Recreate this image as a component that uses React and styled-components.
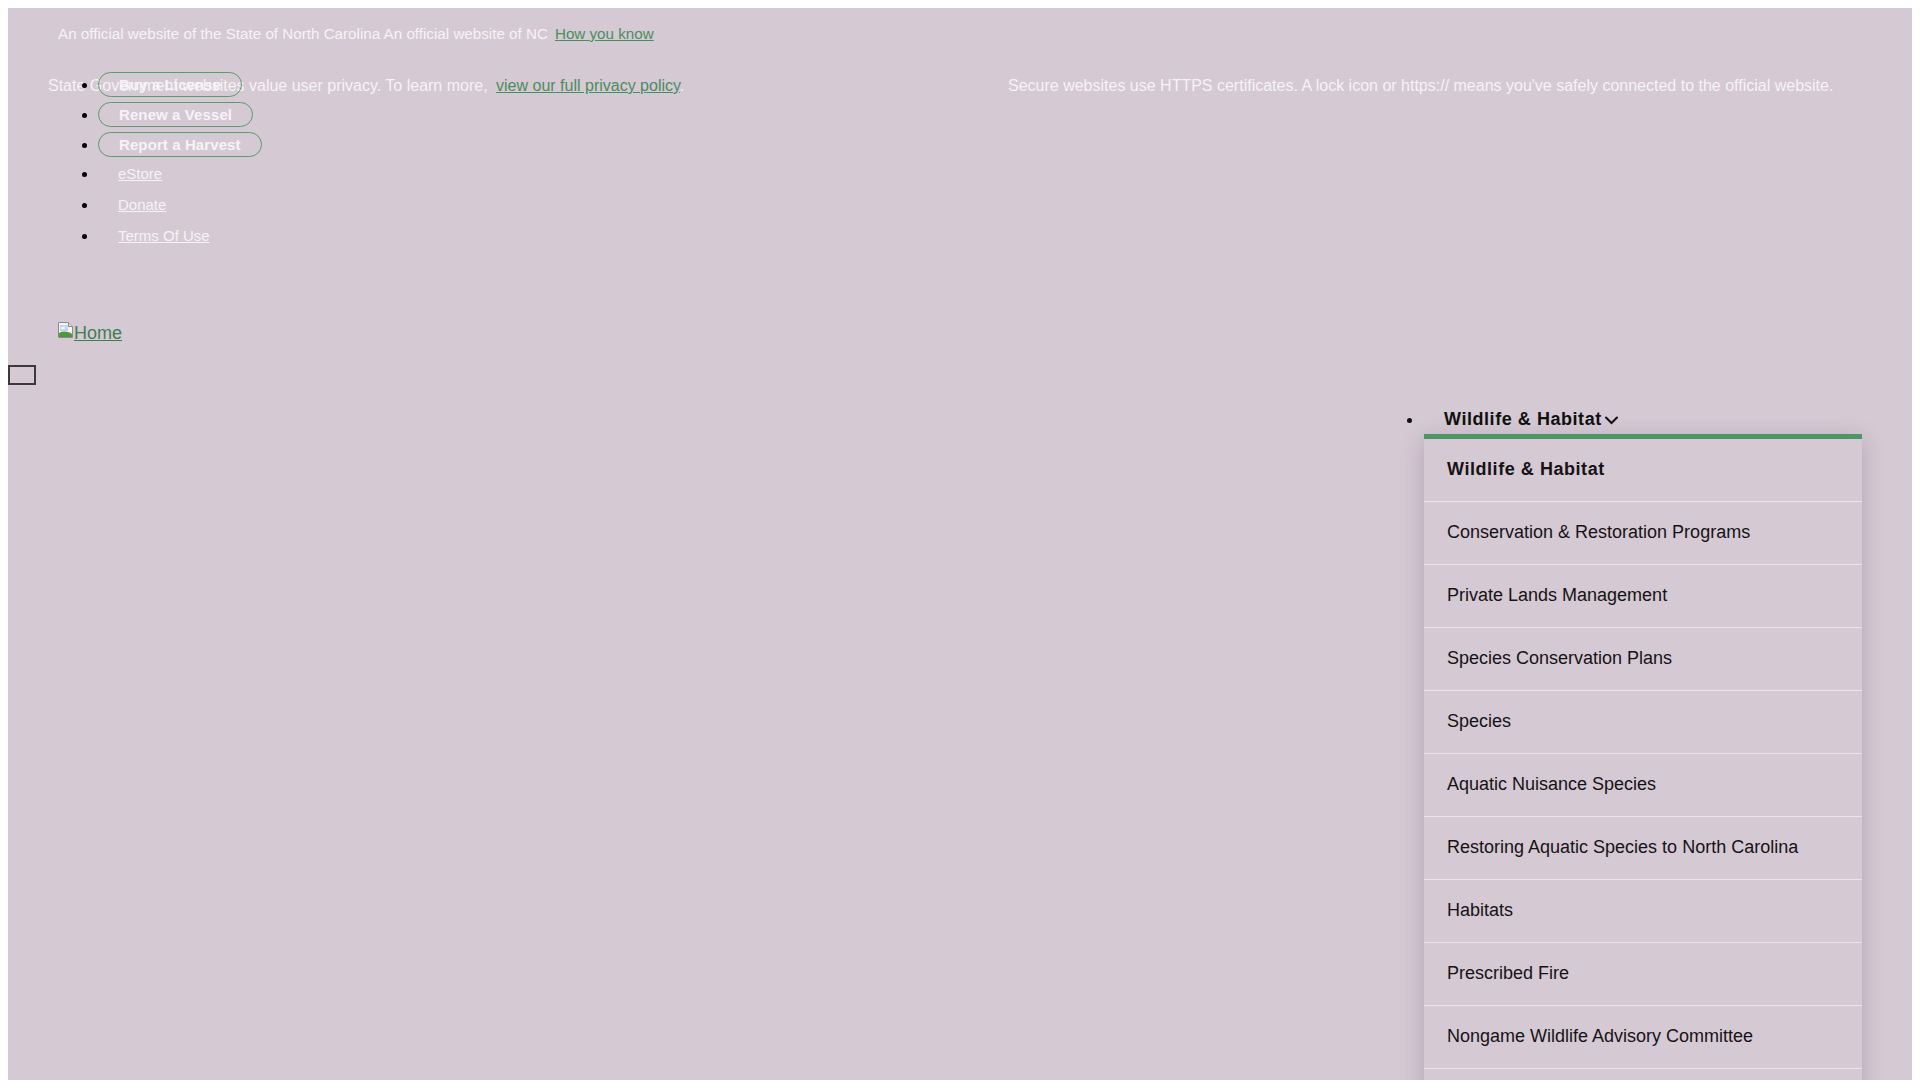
import React from 'react';
import styled, { createGlobalStyle } from 'styled-components';

const GlobalStyle = createGlobalStyle`
  html,
  body {
    margin: 0;
    overflow: hidden;
    background: #ffffff;
  }

  body {
    padding: 8px 8px 0;
    font-family: 'Liberation Sans', Arial, sans-serif;
  }
`;

const utilityLinks = [
  { label: 'Buy a License', button: true },
  { label: 'Renew a Vessel', button: true },
  { label: 'Report a Harvest', button: true },
  { label: 'eStore' },
  { label: 'Donate' },
  { label: 'Terms Of Use' },
];

const menuItems = [
  'Conservation & Restoration Programs',
  'Private Lands Management',
  'Species Conservation Plans',
  'Species',
  'Aquatic Nuisance Species',
  'Restoring Aquatic Species to North Carolina',
  'Habitats',
  'Prescribed Fire',
  'Nongame Wildlife Advisory Committee',
  'Wildlife Diseases',
];

function BrokenImage() {
  return (
    <svg width="16" height="16" viewBox="0 0 16 16" aria-hidden="true">
      <path d="M0.5 0.5h10l4 4v11h-14z" fill="#f4f4f4" stroke="#8a8a8a" />
      <path d="M10.5 0.5v4h4" fill="#dcdcdc" stroke="#8a8a8a" />
      <rect x="2" y="3" width="8" height="6" fill="#bcd9f0" />
      <ellipse cx="5" cy="6" rx="2" ry="1" fill="#ffffff" />
      <path d="M1 15 L1 11 C5 9 9 9 14 12 L14 15 Z" fill="#4c9a3c" />
    </svg>
  );
}

function Chevron() {
  return (
    <svg width="15" height="10" viewBox="0 0 15 10" aria-hidden="true">
      <path
        d="M2 2.5 L7.5 8 L13 2.5"
        fill="none"
        stroke="#111111"
        strokeWidth="2"
        strokeLinecap="round"
      />
    </svg>
  );
}

export default function App() {
  return (
    <>
      <GlobalStyle />
      <Page>
        <Banner>
          <OfficialRow>
            An official website of the State of North Carolina An official
            website of NC
            <GreenLink href="#">How you know</GreenLink>
          </OfficialRow>

          <NoticeGrid>
            <Notice>
              State Government websites value user privacy. To learn more,{' '}
              <PolicyLink href="#">view our full privacy policy</PolicyLink>.
            </Notice>
            <Notice>
              Secure websites use HTTPS certificates. A lock icon or https://
              means you&apos;ve safely connected to the official website.
            </Notice>
          </NoticeGrid>
        </Banner>

        <UtilityList>
          {utilityLinks.map((item) => (
            <UtilityItem key={item.label} $button={item.button}>
              {item.button ? (
                <PillButton>{item.label}</PillButton>
              ) : (
                <UtilityLink href="#">{item.label}</UtilityLink>
              )}
            </UtilityItem>
          ))}
        </UtilityList>

        <HomeRow>
          <HomeLink href="#">
            <BrokenImage />
            Home
          </HomeLink>
        </HomeRow>

        <MenuToggle aria-label="Menu" />

        <NavBar>
          <NavList>
            <NavItem>
              <NavTrigger>
                Wildlife &amp; Habitat
                <Chevron />
              </NavTrigger>

              <Dropdown>
                <DropdownItem $heading>
                  <DropdownLink href="#">Wildlife &amp; Habitat</DropdownLink>
                </DropdownItem>
                {menuItems.map((label) => (
                  <DropdownItem key={label}>
                    <DropdownLink href="#">{label}</DropdownLink>
                  </DropdownItem>
                ))}
              </Dropdown>
            </NavItem>
          </NavList>
        </NavBar>
      </Page>
    </>
  );
}

const Page = styled.div`
  background: #d5c9d3;
  min-height: 1200px;
  color: #f6f3f6;
  font-size: 15px;
`;

const Banner = styled.div`
  padding-top: 17px;
`;

const OfficialRow = styled.p`
  margin: 0;
  padding-left: 50px;
  font-size: 15.2px;
  line-height: 18px;
  display: flex;
  gap: 7px;
  align-items: baseline;
`;

const GreenLink = styled.a`
  color: #4b8d5f;
  text-decoration: underline;
`;

const PolicyLink = styled(GreenLink)`
  margin-left: 4px;
`;

const NoticeGrid = styled.div`
  display: grid;
  grid-template-columns: 1fr 1fr;
  column-gap: 96px;
  padding: 0 40px;
  margin-top: 34px;
`;

const Notice = styled.p`
  margin: 0;
  font-size: 16px;
  line-height: 18px;
`;

const UtilityList = styled.ul`
  margin: -23px 0 0 50px;
  padding-left: 40px;
  list-style: disc;
  color: #000000;
`;

const UtilityItem = styled.li`
  line-height: ${(props) => (props.$button ? '25px' : '24px')};
  margin-bottom: ${(props) => (props.$button ? '5px' : '7px')};
`;

const PillButton = styled.button`
  display: inline-block;
  vertical-align: top;
  height: 25px;
  padding: 0 20px;
  border: 1px solid #5b9b6d;
  border-radius: 20px;
  background: transparent;
  color: #f6f3f6;
  font-family: 'Liberation Sans', Arial, sans-serif;
  font-size: 15px;
  font-weight: 700;
  letter-spacing: 0.1px;
  line-height: 23px;
  cursor: pointer;
`;

const UtilityLink = styled.a`
  padding: 0 20px;
  color: #f6f3f6;
  text-decoration: underline;
`;

const HomeRow = styled.div`
  margin-top: 74px;
  padding-left: 50px;
  line-height: 21px;
`;

const HomeLink = styled.a`
  display: inline-flex;
  align-items: flex-end;
  color: #3f7d53;
  font-size: 18px;
  text-decoration: underline;

  svg {
    flex-shrink: 0;
    margin-bottom: 6px;
  }
`;

const MenuToggle = styled.button`
  display: block;
  width: 28px;
  height: 20px;
  margin-top: 21px;
  padding: 0;
  border: 2px solid #3a3a3a;
  background: transparent;
`;

const NavBar = styled.nav`
  display: flex;
  justify-content: flex-end;
  padding-right: 50px;
  margin-top: 24px;
`;

const NavList = styled.ul`
  margin: 0;
  padding: 0;
  list-style: disc;
  color: #111111;
`;

const NavItem = styled.li`
  position: relative;
  width: 438px;
  font-size: 18px;
`;

const NavTrigger = styled.button`
  display: inline-flex;
  align-items: center;
  gap: 2px;
  padding: 0 20px;
  border: 0;
  background: transparent;
  color: #111111;
  font-family: 'Liberation Sans', Arial, sans-serif;
  font-size: 18px;
  font-weight: 700;
  letter-spacing: 0.55px;
  line-height: 21px;
`;

const Dropdown = styled.ul`
  position: absolute;
  top: 25px;
  left: 0;
  right: 0;
  margin: 0;
  padding: 0;
  list-style: none;
  background: #d5c9d3;
  border-top: 5px solid #4e9566;
  box-shadow: 0 6px 22px rgba(60, 30, 60, 0.22);
`;

const DropdownItem = styled.li`
  border-bottom: 1px solid #eae4e9;
  font-weight: ${(props) => (props.$heading ? 700 : 400)};
  letter-spacing: ${(props) => (props.$heading ? '0.55px' : 'normal')};
`;

const DropdownLink = styled.a`
  display: block;
  padding: 20px 23px 21px;
  color: #161316;
  font-size: 18px;
  line-height: 21px;
  text-decoration: none;
`;
